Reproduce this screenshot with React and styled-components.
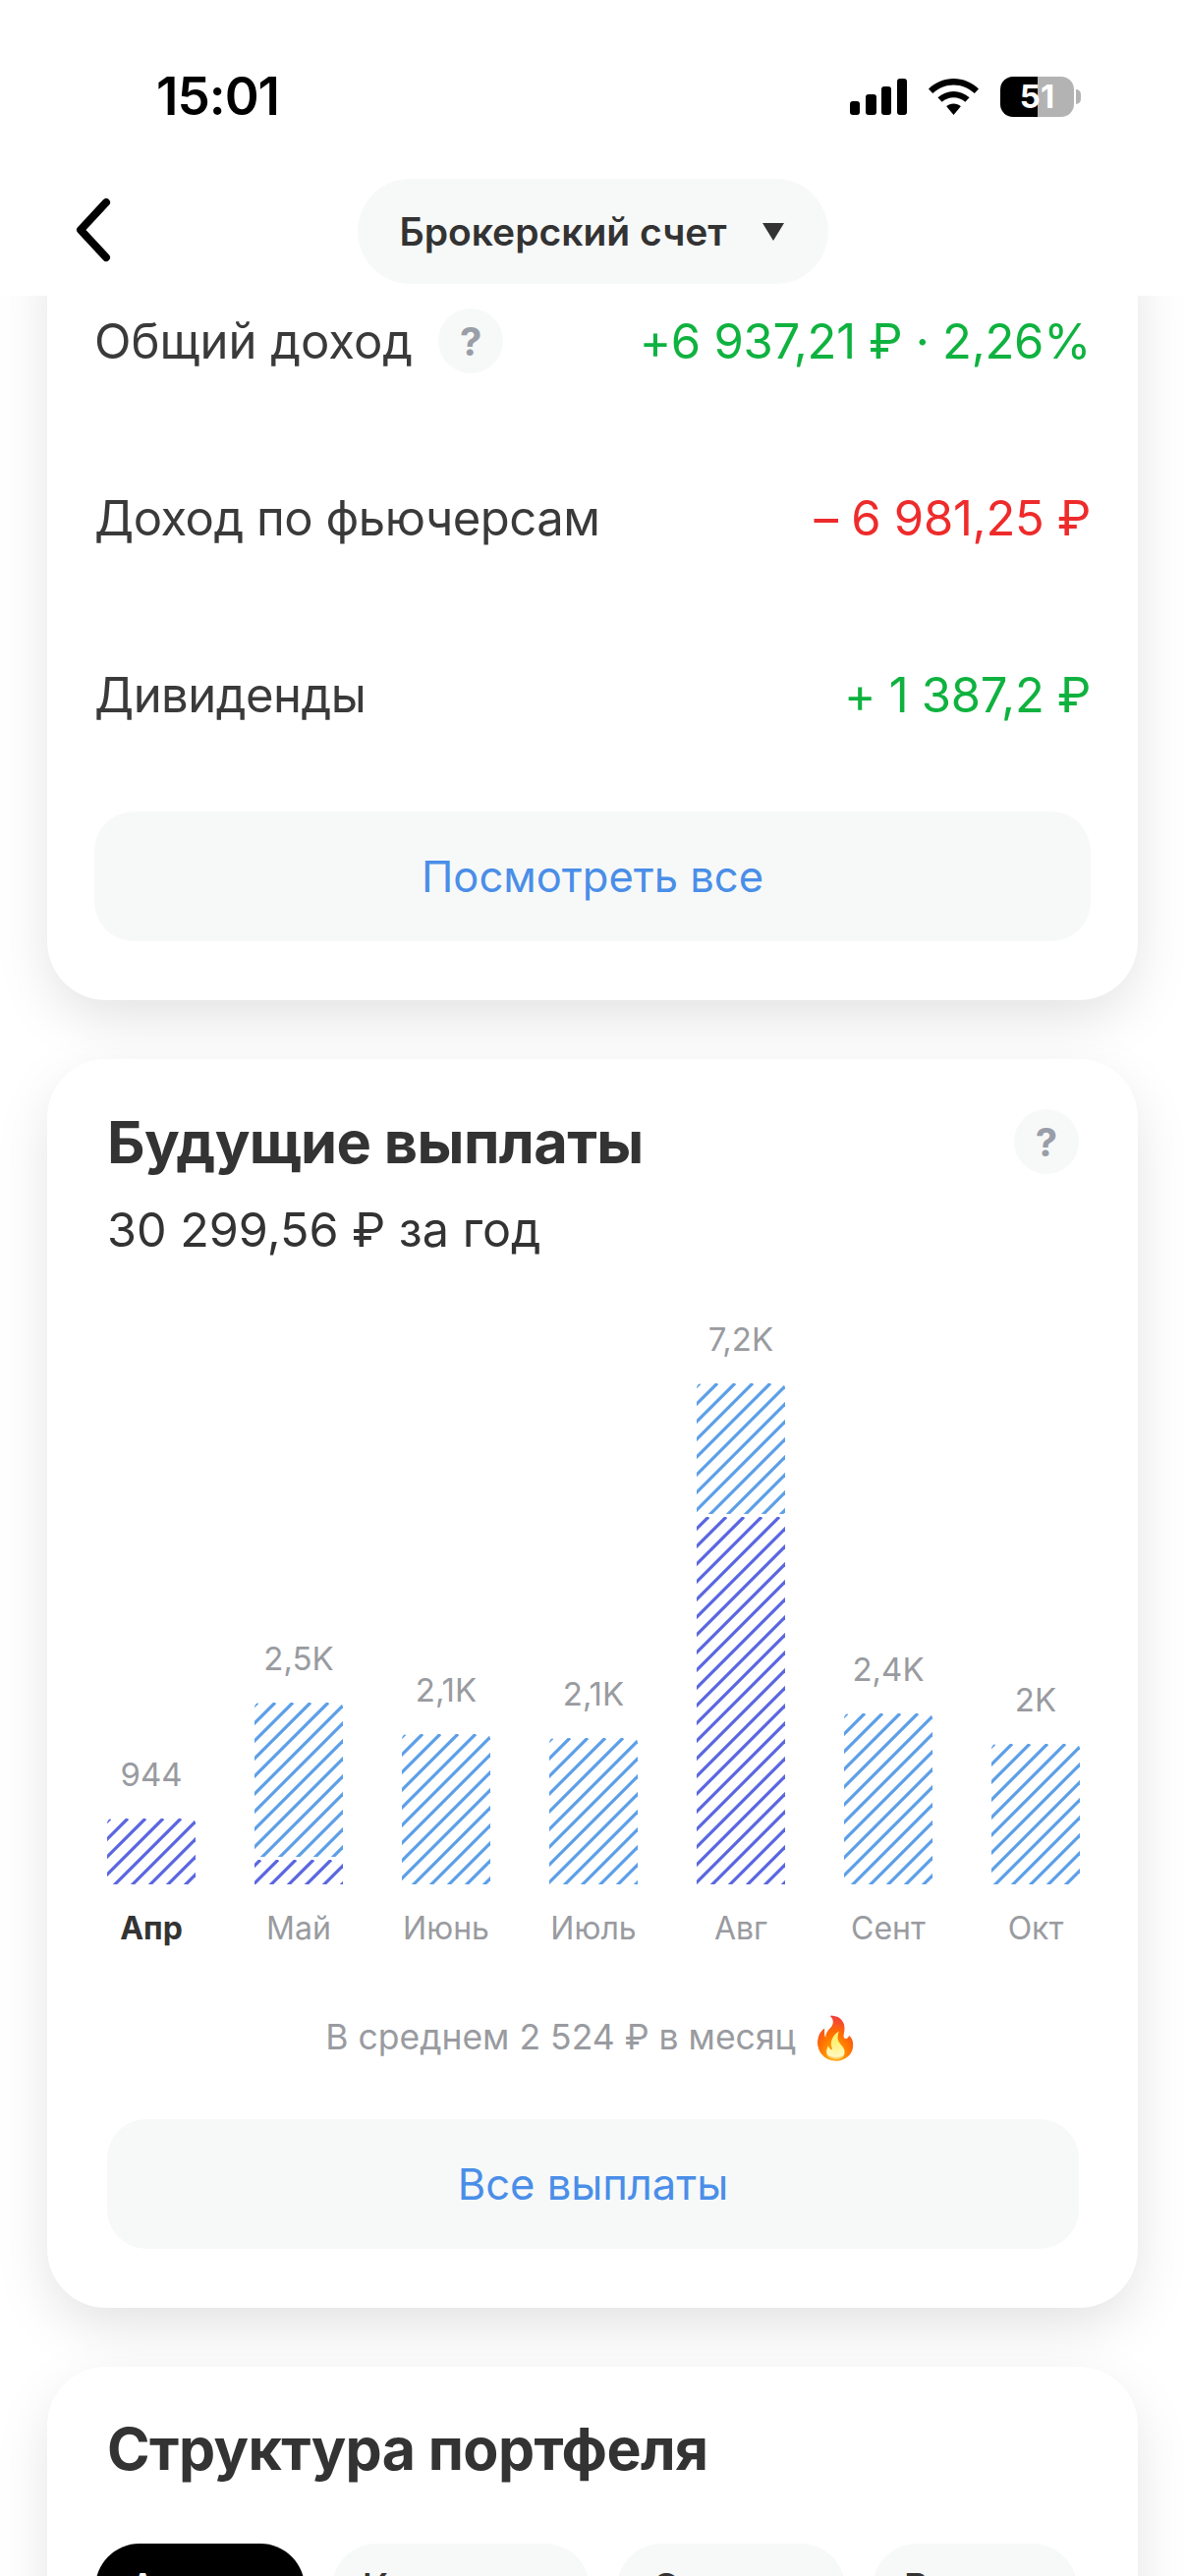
import React from "react";
import styled, { createGlobalStyle } from "styled-components";

const GlobalStyle = createGlobalStyle`
  html, body {
    margin: 0;
    padding: 0;
    background: #ffffff;
  }
  * {
    box-sizing: border-box;
  }
`;

const Screen = styled.div`
  width: 1206px;
  height: 2622px;
  overflow: hidden;
  background: #fff;
  font-family: Inter, "Noto Sans", sans-serif;
  color: #333333;
`;

const Header = styled.header`
  position: relative;
  z-index: 2;
  height: 301px;
  background: #fff;
`;

const StatusBar = styled.div`
  height: 182px;
  padding: 72px 113px 0 159px;
  display: flex;
  justify-content: space-between;
  align-items: flex-start;
`;

const Time = styled.div`
  font-size: 53px;
  line-height: 52px;
  font-weight: 600;
  color: #000;
  letter-spacing: -1px;
`;

const StatusIcons = styled.div`
  display: flex;
  align-items: center;
  gap: 22px;
  height: 52px;
`;

const Battery = styled.div`
  position: relative;
  width: 75px;
  height: 41px;
  border-radius: 13px;
  background: linear-gradient(90deg, #000 0 38px, #b3b3b3 38px);
  color: #fff;
  font-size: 33px;
  line-height: 41px;
  font-weight: 700;
  text-align: center;
  &::after {
    content: "";
    position: absolute;
    right: -7px;
    top: 13px;
    width: 5px;
    height: 15px;
    border-radius: 0 8px 8px 0;
    background: #b3b3b3;
  }
`;

const NavBar = styled.div`
  display: flex;
  justify-content: center;
  position: relative;
`;

const BackIcon = styled.svg`
  position: absolute;
  left: 74px;
  top: 19px;
`;

const AccountPill = styled.div`
  width: 479px;
  height: 107px;
  border-radius: 54px;
  background: #f7f9f8;
  display: flex;
  align-items: center;
  padding-left: 43px;
  gap: 36px;
  font-size: 39px;
  font-weight: 600;
  color: #333;
`;

const Caret = styled.span`
  width: 0;
  height: 0;
  border-left: 11px solid transparent;
  border-right: 11px solid transparent;
  border-top: 18px solid #333;
`;

// the list is scrolled, so the first card starts under the header
const Cards = styled.main`
  margin-top: -88px;
  padding: 0 48px;
  display: flex;
  flex-direction: column;
  gap: 60px;
`;

const Card = styled.section`
  background: #fff;
  border-radius: 60px;
  box-shadow: 0 20px 60px -6px rgba(0, 0, 0, 0.13);
  padding: ${(p) => p.$padding};
`;

const IncomeRow = styled.div`
  height: 180px;
  display: flex;
  align-items: center;
  justify-content: space-between;
  font-size: 49px;
  letter-spacing: -0.5px;
  color: #3a3a3a;
`;

const RowLabel = styled.div`
  display: flex;
  align-items: center;
  gap: 26px;
  letter-spacing: 0;
`;

const Amount = styled.span`
  letter-spacing: -0.3px;
  color: ${(p) => (p.$negative ? "#ee2b2b" : "#0fb23f")};
`;

const HelpBadge = styled.span`
  width: 66px;
  height: 66px;
  border-radius: 50%;
  background: #f7f9f8;
  color: #9a9ea8;
  font-size: 40px;
  font-weight: 700;
  display: flex;
  align-items: center;
  justify-content: center;
`;

const WideButton = styled.div`
  margin-top: ${(p) => p.$top}px;
  height: 132px;
  border-radius: 40px;
  background: #f7f9f8;
  color: #4a8ee8;
  font-size: 43.5px;
  display: flex;
  align-items: center;
  justify-content: center;
`;

const TitleRow = styled.div`
  display: flex;
  align-items: center;
  justify-content: space-between;
  height: 66px;
`;

const Title = styled.h2`
  margin: 0;
  font-size: 59.5px;
  line-height: 66px;
  font-weight: 700;
  letter-spacing: -0.6px;
  color: #333;
`;

const SectionTitle = styled(Title)`
  font-size: 59px;
`;

const Subtitle = styled.div`
  margin-top: 27px;
  font-size: 48.5px;
  line-height: 60px;
  color: #333;
`;

const Chart = styled.div`
  margin-top: 50px;
  height: 648px;
  display: flex;
  gap: 60px;
`;

const Column = styled.div`
  width: 90px;
  display: flex;
  flex-direction: column;
  align-items: center;
  justify-content: flex-end;
`;

const BarValue = styled.div`
  font-size: 33px;
  line-height: 36px;
  color: #999ba0;
  margin-bottom: 27px;
`;

const MonthLabel = styled.div`
  margin-top: 28px;
  font-size: 32px;
  line-height: 34px;
  font-weight: ${(p) => (p.$active ? 700 : 400)};
  color: ${(p) => (p.$active ? "#333" : "#999ba0")};
`;

const HatchBox = styled.svg`
  display: block;
  border-radius: ${(p) => (p.$top ? "5px 5px 0 0" : "0")};
`;

const BarStack = styled.div`
  display: flex;
  flex-direction: column;
  gap: 3px;
`;

const Average = styled.div`
  margin-top: 72px;
  height: 44px;
  font-size: 35.5px;
  line-height: 44px;
  color: #999ba0;
  display: flex;
  justify-content: center;
  align-items: center;
  gap: 14px;
`;

const Flame = styled.span`
  font-size: 42px;
`;

const Tabs = styled.div`
  margin-top: 63px;
  margin-left: -12px;
  display: flex;
  gap: 28px;
`;

const Tab = styled.div`
  width: ${(p) => p.$width}px;
  height: 90px;
  border-radius: 45px;
  background: ${(p) => (p.$active ? "#000" : "#f7f9f8")};
  color: ${(p) => (p.$active ? "#fff" : "#333")};
  font-size: 39px;
  font-weight: 500;
  line-height: 90px;
  text-align: center;
`;

const BLUE = "#5c9fe8";
const VIOLET = "#5a66e0";

// one hatched segment, phase = where the first stripe meets the top edge
function Hatch({ height, color, phase, top }) {
  const lines = [];
  for (let c = phase - 18; c < 90 + height + 18; c += 18) {
    lines.push(<line key={c} x1={c} y1={0} x2={c - height - 2} y2={height + 2} />);
  }
  return (
    <HatchBox $top={top} width="90" height={height} stroke={color} strokeWidth="3.2">
      {lines}
    </HatchBox>
  );
}

const months = [
  { name: "Апр", value: "944", lower: 67, active: true },
  { name: "Май", value: "2,5K", upper: 157, lower: 25, lowerPhase: 6 },
  { name: "Июнь", value: "2,1K", upper: 153 },
  { name: "Июль", value: "2,1K", upper: 149 },
  { name: "Авг", value: "7,2K", upper: 133, lower: 374, lowerPhase: 12 },
  { name: "Сент", value: "2,4K", upper: 174 },
  { name: "Окт", value: "2K", upper: 143 },
];

function SignalIcon() {
  return (
    <svg width="58" height="37" viewBox="0 0 58 37" fill="#000">
      <rect x="0" y="23" width="10" height="14" rx="3" />
      <rect x="16" y="16" width="11" height="21" rx="3" />
      <rect x="32" y="8" width="10" height="29" rx="3" />
      <rect x="48" y="0" width="10" height="37" rx="3" />
    </svg>
  );
}

function WifiIcon() {
  return (
    <svg width="51" height="37" viewBox="0 0 51 37" fill="#000">
      <path d="M25.5 0C35 0 44 3.800 51 10.500L46.800 15C41 9.500 33.500 6.400 25.500 6.400S10 9.500 4.200 15L0 10.500C7 3.800 16 0 25.500 0Z" />
      <path d="M25.500 13C31.600 13 37.200 15.300 41.600 19.300L37.300 23.800C34 20.900 29.900 19.300 25.500 19.300S17 20.900 13.700 23.800L9.400 19.300C13.800 15.300 19.400 13 25.500 13Z" />
      <path d="M25.500 25.500C28.300 25.500 30.800 26.500 32.800 28.200L25.500 37L18.200 28.200C20.200 26.500 22.700 25.500 25.500 25.500Z" />
    </svg>
  );
}

export default function App() {
  return (
    <Screen>
      <GlobalStyle />
      <Header>
        <StatusBar>
          <Time>15:01</Time>
          <StatusIcons>
            <SignalIcon />
            <WifiIcon />
            <Battery>51</Battery>
          </StatusIcons>
        </StatusBar>
        <NavBar>
          <BackIcon width="40" height="66" viewBox="0 0 40 66" fill="none">
            <path d="M34 5L8 33L34 61" stroke="#000" strokeWidth="8" strokeLinecap="round" strokeLinejoin="round" />
          </BackIcon>
          <AccountPill>
            Брокерский счет
            <Caret />
          </AccountPill>
        </NavBar>
      </Header>

      <Cards>
        <Card $padding="44px 48px 60px">
          <IncomeRow>
            <RowLabel>
              Общий доход
              <HelpBadge>?</HelpBadge>
            </RowLabel>
            <Amount>+6 937,21 ₽ · 2,26%</Amount>
          </IncomeRow>
          <IncomeRow>
            Доход по фьючерсам
            <Amount $negative>– 6 981,25 ₽</Amount>
          </IncomeRow>
          <IncomeRow>
            Дивиденды
            <Amount>+ 1 387,2 ₽</Amount>
          </IncomeRow>
          <WideButton $top={29}>Посмотреть все</WideButton>
        </Card>

        <Card $padding="51px 60px 60px 61px">
          <TitleRow>
            <Title>Будущие выплаты</Title>
            <HelpBadge>?</HelpBadge>
          </TitleRow>
          <Subtitle>30 299,56 ₽ за год</Subtitle>
          <Chart>
            {months.map((m) => (
              <Column key={m.name}>
                <BarValue>{m.value}</BarValue>
                <BarStack>
                  {m.upper && <Hatch height={m.upper} color={BLUE} phase={21} top />}
                  {m.lower && (
                    <Hatch height={m.lower} color={VIOLET} phase={m.lowerPhase ?? 21} top={!m.upper} />
                  )}
                </BarStack>
                <MonthLabel $active={m.active}>{m.name}</MonthLabel>
              </Column>
            ))}
          </Chart>
          <Average>
            В среднем 2 524 ₽ в месяц
            <Flame>🔥</Flame>
          </Average>
          <WideButton $top={61}>Все выплаты</WideButton>
        </Card>

        <Card $padding="51px 60px 60px 61px">
          <SectionTitle>Структура портфеля</SectionTitle>
          <Tabs>
            <Tab $active $width={213}>Активы</Tab>
            <Tab $width={262}>Категории</Tab>
            <Tab $width={232}>Сектора</Tab>
            <Tab $width={208}>Валюта</Tab>
          </Tabs>
        </Card>
      </Cards>
    </Screen>
  );
}
